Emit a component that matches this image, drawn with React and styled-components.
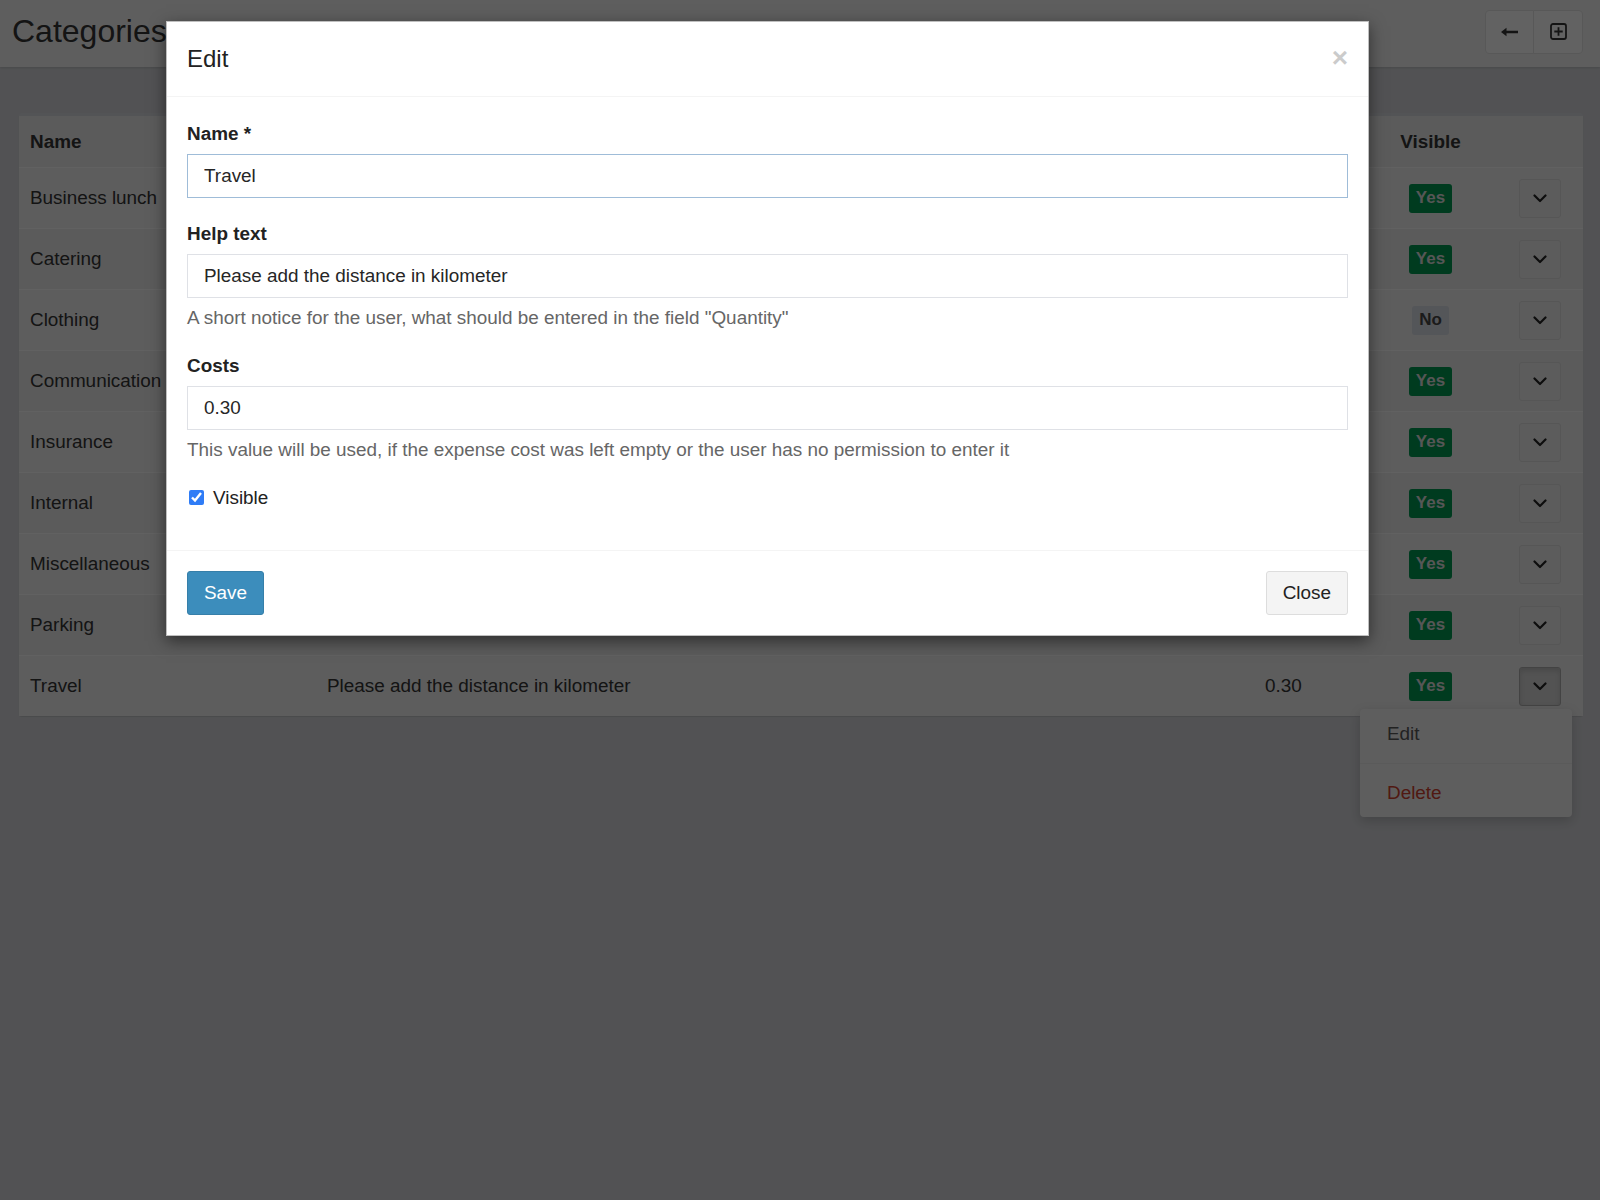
import React, { useEffect, useRef } from "react";
import styled, { createGlobalStyle } from "styled-components";

const GlobalStyle = createGlobalStyle`
  html, body { margin: 0; padding: 0; }
  body {
    font-family: "Liberation Sans", Arial, Helvetica, sans-serif;
    background: #cdced2;
    color: #333;
  }
  * { box-sizing: border-box; }
`;

const Page = styled.div`
  position: relative;
  width: 100%;
  min-height: 1200px;
  overflow: hidden;
  background: #cdced2;
`;

const ContentHeader = styled.header`
  height: 67px;
  background: #ececec;
  display: flex;
  align-items: center;
  justify-content: space-between;
  padding: 0 17px 4px 12px;
  box-shadow: 0 1px 2px rgba(0, 0, 0, 0.12);
`;

const Title = styled.h1`
  margin: 0;
  font-size: 32px;
  font-weight: 400;
  color: #333;
`;

const BtnGroup = styled.div`
  display: flex;
`;

const HeadBtn = styled.button`
  width: ${(p) => p.$w}px;
  height: 44px;
  background: #f4f4f4;
  border: 1px solid #dcdcdc;
  display: flex;
  align-items: center;
  justify-content: center;
  color: #333;
  padding: 0;
  &:first-child { border-radius: 4px 0 0 4px; }
  &:last-child { border-radius: 0 4px 4px 0; }
  & + & { margin-left: -1px; }
`;

const Content = styled.main`
  padding: 46px 17px 0 19px;
`;

const Box = styled.section`
  background: #e3e3e3;
  border-top: 3px solid #cfd2d8;
  border-radius: 3px;
  box-shadow: 0 1px 1px rgba(0, 0, 0, 0.1);
`;

const Row = styled.div`
  display: grid;
  grid-template-columns: 297px 938px 137px 79px 1fr;
  height: ${(p) => (p.$head ? 51 : 61)}px;
  background: ${(p) => (p.$striped ? "#e8e8e8" : "transparent")};
  border-top: ${(p) => (p.$head ? "none" : "1px solid #f2f2f2")};
  font-size: 18.9px;
  font-weight: ${(p) => (p.$head ? 700 : 400)};
  color: #333;
`;

const Cell = styled.div`
  display: flex;
  align-items: center;
  justify-content: ${(p) => p.$justify || "flex-start"};
  padding: ${(p) => (p.$actions ? "0 22px 0 0" : p.$justify === "center" ? "0" : "0 11px")};
  white-space: nowrap;
`;

const Badge = styled.span`
  display: inline-flex;
  align-items: center;
  height: 29px;
  padding: 0 7px;
  border-radius: 3px;
  font-size: 17px;
  font-weight: 700;
  background: ${(p) => (p.$yes ? "#00934f" : "#d2d6de")};
  color: ${(p) => (p.$yes ? "#d8d8d8" : "#444")};
`;

const ActionWrap = styled.span`
  position: relative;
  display: inline-flex;
`;

const DropBtn = styled.button`
  width: 42px;
  height: 39px;
  padding: 0;
  display: flex;
  align-items: center;
  justify-content: center;
  border-radius: 3px;
  background: ${(p) => (p.$active ? "#cfcfcf" : "#e6e6e6")};
  border: 1px solid ${(p) => (p.$active ? "#a9a9a9" : "#d6d6d6")};
  box-shadow: ${(p) => (p.$active ? "inset 0 3px 5px rgba(0,0,0,0.125)" : "none")};
  color: #222;
`;

const Menu = styled.ul`
  position: absolute;
  top: calc(100% + 3px);
  right: -11px;
  width: 212px;
  margin: 0;
  padding: 0;
  list-style: none;
  background: #ececec;
  border-radius: 4px;
  box-shadow: 0 4px 12px rgba(0, 0, 0, 0.18);
  z-index: 2;
`;

const MenuItem = styled.li`
  height: ${(p) => p.$h}px;
  display: flex;
  align-items: center;
  padding-left: 27px;
  font-size: 18.9px;
  color: ${(p) => (p.$danger ? "#c9402f" : "#555")};
`;

const Divider = styled.li`
  height: 1px;
  margin: 4px 0 6px;
  background: #e2e2e2;
`;

const Backdrop = styled.div`
  position: absolute;
  inset: 0;
  background: rgba(0, 0, 0, 0.6);
  z-index: 5;
`;

const Modal = styled.div`
  position: absolute;
  top: 21px;
  left: 166px;
  width: 1203px;
  background: #fff;
  border: 1px solid rgba(0, 0, 0, 0.25);
  box-shadow: 0 5px 15px rgba(0, 0, 0, 0.5);
  z-index: 10;
`;

const ModalHeader = styled.div`
  height: 75px;
  display: flex;
  align-items: center;
  justify-content: space-between;
  padding: 0 20px;
  border-bottom: 1px solid #f4f4f4;
`;

const ModalTitle = styled.h4`
  margin: 0;
  font-size: 24px;
  font-weight: 400;
  color: #222;
`;

const CloseX = styled.button`
  border: 0;
  background: none;
  padding: 0;
  font-family: "Liberation Sans", Arial, sans-serif;
  font-size: 28px;
  font-weight: 700;
  line-height: 1;
  color: #000;
  opacity: 0.2;
  margin-top: -2px;
`;

const ModalBody = styled.div`
  padding: 24px 20px 40px;
`;

const FormGroup = styled.div`
  margin-bottom: 23px;
`;

const Label = styled.label`
  display: block;
  font-size: 18.9px;
  line-height: 25px;
  font-weight: 700;
  color: #222;
  margin-bottom: 8px;
`;

const Input = styled.input`
  display: block;
  width: 100%;
  height: 44px;
  padding: 0 16px;
  font-family: "Liberation Sans", Arial, sans-serif;
  font-size: 18.9px;
  color: #262626;
  border: 1px solid ${(p) => (p.$focus ? "#9fbcd8" : "#dfe1e6")};
  border-radius: 0;
  outline: none;
  background: #fff;
  &:focus { border-color: #9fbcd8; }
`;

const HelpBlock = styled.p`
  margin: 7px 0 0;
  font-size: 18.9px;
  line-height: 25px;
  color: #666;
`;

const CheckRow = styled.label`
  display: flex;
  align-items: center;
  height: 25px;
  font-size: 18.9px;
  color: #222;
`;

const Check = styled.input`
  width: 15px;
  height: 15px;
  margin: 0 9px 0 2px;
  accent-color: #2f7cf6;
`;

const ModalFooter = styled.div`
  display: flex;
  justify-content: space-between;
  padding: 20px;
  border-top: 1px solid #f4f4f4;
`;

const Btn = styled.button`
  height: 44px;
  padding: 0 16px;
  font-family: "Liberation Sans", Arial, sans-serif;
  font-size: 18.9px;
  border-radius: 3px;
  background: ${(p) => (p.$primary ? "#3c8dbc" : "#f4f4f4")};
  border: 1px solid ${(p) => (p.$primary ? "#367fa9" : "#ddd")};
  color: ${(p) => (p.$primary ? "#fff" : "#222")};
`;

const Chevron = () => (
  <svg width="14" height="9" viewBox="0 0 14 9" fill="none">
    <path d="M1.5 1.5 L7 7 L12.5 1.5" stroke="currentColor" strokeWidth="2.2" strokeLinecap="round" strokeLinejoin="round" />
  </svg>
);

const LongArrowLeft = () => (
  <svg width="17" height="10" viewBox="0 0 17 10" fill="currentColor">
    <path d="M0 5 L5.5 0.8 L5.5 3.8 L17 3.8 L17 6.2 L5.5 6.2 L5.5 9.2 Z" />
  </svg>
);

const PlusSquare = () => (
  <svg width="17" height="17" viewBox="0 0 17 17" fill="none" stroke="currentColor">
    <rect x="1" y="1" width="15" height="15" rx="2" strokeWidth="1.8" />
    <path d="M8.5 4.3 V12.7 M4.3 8.5 H12.7" strokeWidth="1.8" />
  </svg>
);

const rows = [
  { name: "Business lunch", visible: true },
  { name: "Catering", visible: true },
  { name: "Clothing", visible: false },
  { name: "Communication", visible: true },
  { name: "Insurance", visible: true },
  { name: "Internal", visible: true },
  { name: "Miscellaneous", visible: true },
  { name: "Parking", visible: true },
  { name: "Travel", help: "Please add the distance in kilometer", cost: "0.30", visible: true, open: true },
];

export default function App() {
  const nameRef = useRef(null);
  useEffect(() => {
    const el = nameRef.current;
    if (el) {
      el.focus();
      el.setSelectionRange(0, 0);
    }
  }, []);

  return (
    <>
      <GlobalStyle />
      <Page>
        <ContentHeader>
          <Title>Categories</Title>
          <BtnGroup>
            <HeadBtn $w={49}><LongArrowLeft /></HeadBtn>
            <HeadBtn $w={50}><PlusSquare /></HeadBtn>
          </BtnGroup>
        </ContentHeader>
        <Content>
          <Box>
            <Row $head>
              <Cell>Name</Cell>
              <Cell>Help text</Cell>
              <Cell>Costs</Cell>
              <Cell $justify="center">Visible</Cell>
              <Cell />
            </Row>
            {rows.map((r, i) => (
              <Row key={r.name} $striped={i % 2 === 0}>
                <Cell>{r.name}</Cell>
                <Cell>{r.help || ""}</Cell>
                <Cell>{r.cost || ""}</Cell>
                <Cell $justify="center">
                  <Badge $yes={r.visible}>{r.visible ? "Yes" : "No"}</Badge>
                </Cell>
                <Cell $justify="flex-end" $actions>
                  <ActionWrap>
                    <DropBtn $active={r.open}><Chevron /></DropBtn>
                    {r.open && (
                      <Menu>
                        <MenuItem $h={50}>Edit</MenuItem>
                        <Divider />
                        <MenuItem $h={47} $danger>Delete</MenuItem>
                      </Menu>
                    )}
                  </ActionWrap>
                </Cell>
              </Row>
            ))}
          </Box>
        </Content>
        <Backdrop />
        <Modal>
          <ModalHeader>
            <ModalTitle>Edit</ModalTitle>
            <CloseX aria-label="Close">×</CloseX>
          </ModalHeader>
          <ModalBody>
            <FormGroup>
              <Label>Name *</Label>
              <Input ref={nameRef} $focus defaultValue="Travel" />
            </FormGroup>
            <FormGroup>
              <Label>Help text</Label>
              <Input defaultValue="Please add the distance in kilometer" />
              <HelpBlock>A short notice for the user, what should be entered in the field "Quantity"</HelpBlock>
            </FormGroup>
            <FormGroup>
              <Label>Costs</Label>
              <Input defaultValue="0.30" />
              <HelpBlock>This value will be used, if the expense cost was left empty or the user has no permission to enter it</HelpBlock>
            </FormGroup>
            <CheckRow>
              <Check type="checkbox" defaultChecked />
              Visible
            </CheckRow>
          </ModalBody>
          <ModalFooter>
            <Btn $primary>Save</Btn>
            <Btn>Close</Btn>
          </ModalFooter>
        </Modal>
      </Page>
    </>
  );
}
